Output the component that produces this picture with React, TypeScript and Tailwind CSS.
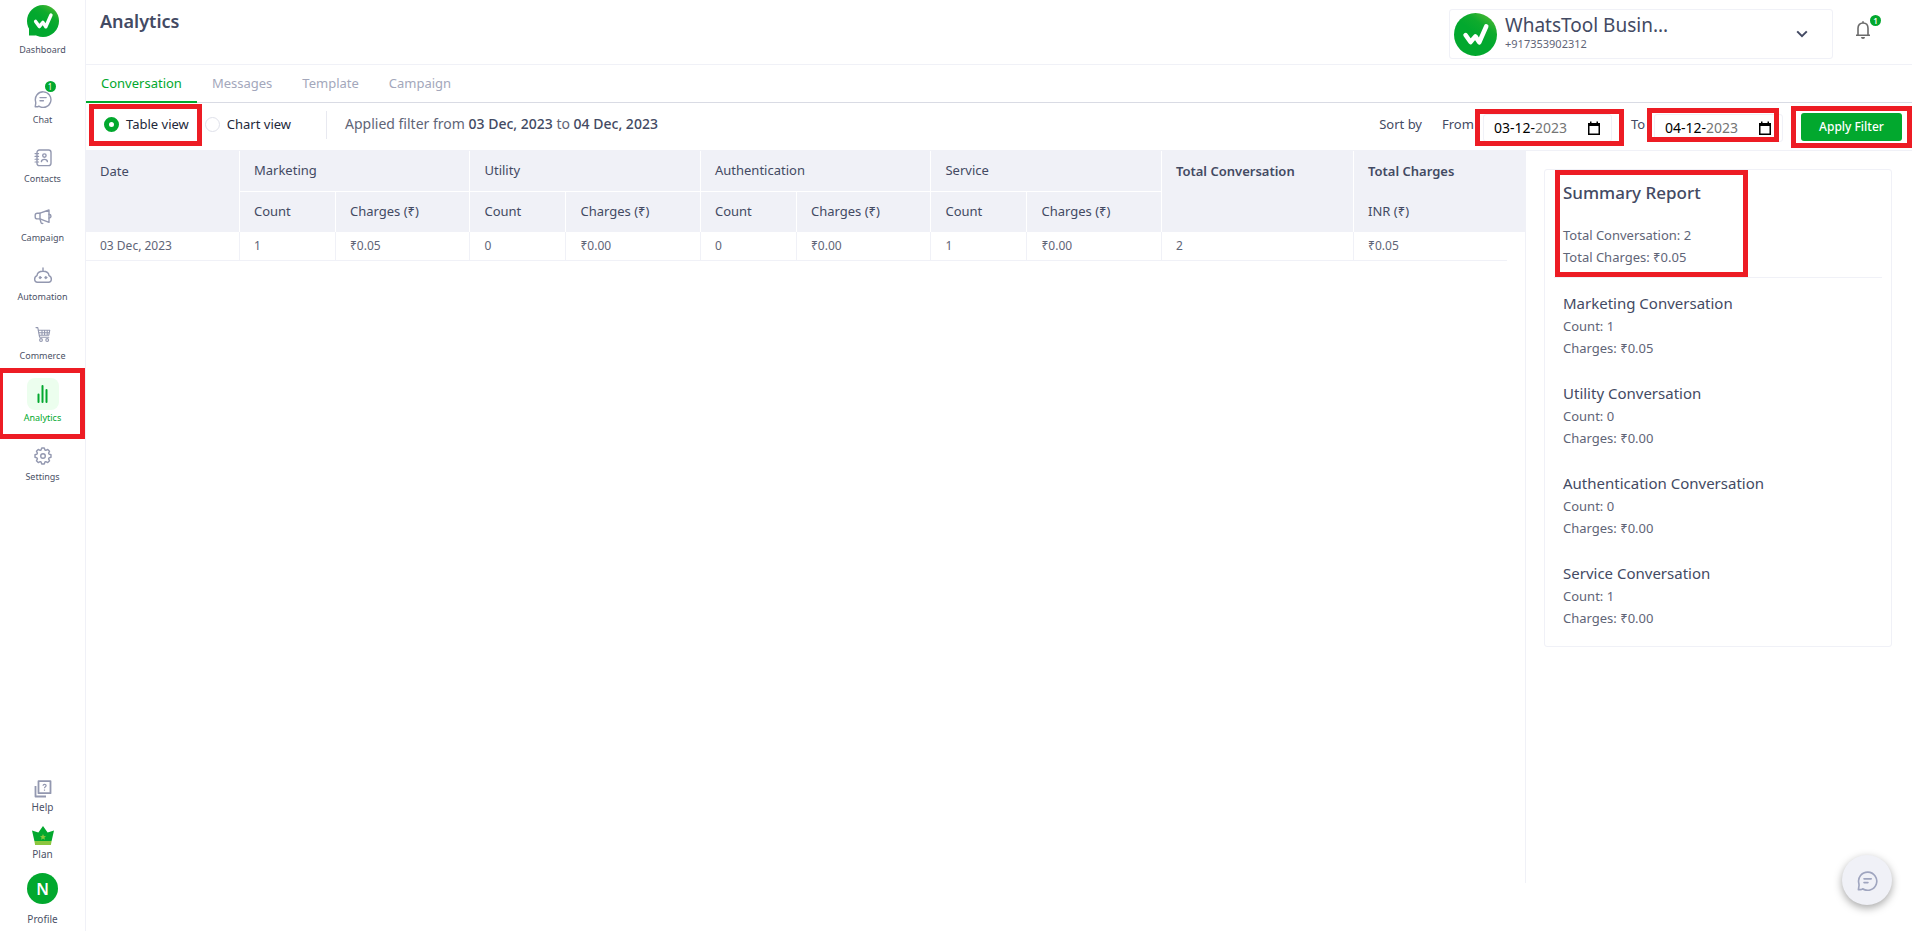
import React, { useState } from "react";

type IconProps = { className?: string };

const iconBase = {
  fill: "none",
  stroke: "currentColor",
  strokeWidth: 1.4,
  strokeLinecap: "round" as const,
  strokeLinejoin: "round" as const,
  "aria-hidden": true,
};

function LogoIcon({ className, bubble, id }: IconProps & { bubble?: boolean; id: string }) {
  return (
    <svg viewBox="0 0 32 32" className={className} aria-hidden="true">
      <defs>
        <linearGradient id={id} x1="0.9" y1="0" x2="0.55" y2="0.5">
          <stop offset="0" stopColor="#5abb35" />
          <stop offset="0.6" stopColor="#0fab2d" />
          <stop offset="1" stopColor="#02a82e" />
        </linearGradient>
      </defs>
      <circle cx="16" cy="16" r="16" fill={`url(#${id})`} />
      {bubble && <path d="M2 20v10.5q5 .3 9-.6z" fill="#02a82e" />}
      <path
        d="M8.600 16.400l3.700 5.200 3.600-4.200 2.900 4.400 5.200-11.800"
        fill="none"
        stroke="#fff"
        strokeWidth="3.400"
        strokeLinecap="round"
        strokeLinejoin="round"
      />
    </svg>
  );
}

function ChatIcon({ className }: IconProps) {
  return (
    <svg viewBox="0 0 18 18" className={className} {...iconBase}>
      <path d="M1.200 16.800h1.600q1.200 0 2-.7A7.800 7.800 0 1 0 1.600 11.600q.3 1.500 0 2.600z" />
      <path d="M6 7.600h6.200M6 10.800h3.400" />
    </svg>
  );
}

function ContactsIcon({ className }: IconProps) {
  return (
    <svg viewBox="0 0 18 18" className={className} {...iconBase}>
      <rect x="3" y="1" width="14" height="15.6" rx="2.4" />
      <path d="M1 4.600h3.600M1 7.400h3.600M1 10.200h3.600M1 13h3.600" strokeWidth="1.1" />
      <circle cx="10.4" cy="6.6" r="1.7" />
      <path d="M7.400 12.600c.3-3 5.700-3 6 0" />
    </svg>
  );
}

function CampaignIcon({ className }: IconProps) {
  return (
    <svg viewBox="0 0 18 18" className={className} {...iconBase}>
      <path d="M6 5.200L15 2v12.400L6 10.900H3.400Q1.200 10.900 1.200 8.900V7.200Q1.200 5.200 3.400 5.200z" />
      <path d="M6 5.200v5.700M15 6.300q2 .3 2 1.900t-2 1.900M6 11l1 3.600q.4 1.200 1.800.8" />
    </svg>
  );
}

function AutomationIcon({ className }: IconProps) {
  return (
    <svg viewBox="0 0 20 18" className={className} {...iconBase}>
      <path d="M10 1v3.200M4 8.600C4.600 2.800 15.400 2.800 16 8.600c3.400 1.600 3 6.600-.4 6.600H4.400C1 15.200.6 10.200 4 8.600z" />
      <circle cx="7.200" cy="10.600" r="1.100" fill="currentColor" strokeWidth="0.8" />
      <circle cx="12.800" cy="10.600" r="1.100" fill="currentColor" strokeWidth="0.8" />
    </svg>
  );
}

function CommerceIcon({ className }: IconProps) {
  return (
    <svg viewBox="0 0 18 18" className={className} {...iconBase} strokeWidth={1.1}>
      <path d="M2 1.600h1.800l1.800 9.600h9.200" />
      <path d="M4.400 4.200h11.400l-1 5H5.400M4.800 6.700h10.600M8 4.200v5M10.600 4.200v5M13.200 4.200v5" />
      <circle cx="7" cy="14" r="1.400" />
      <circle cx="13.200" cy="14" r="1.400" />
    </svg>
  );
}

function AnalyticsIcon({ className }: IconProps) {
  return (
    <svg viewBox="0 0 18 20" className={className} {...iconBase} strokeWidth={2}>
      <path d="M4.500 10.500v7.500M8.500 2v16M12.500 6v12" />
    </svg>
  );
}

const gearPoints = Array.from({ length: 8 }, (_, i) =>
  [
    [-18, 6.3],
    [-9, 8.1],
    [9, 8.1],
    [18, 6.3],
  ]
    .map(([offset, r]) => {
      const a = ((i * 45 + offset) * Math.PI) / 180;
      return `${(9 + r * Math.sin(a)).toFixed(2)},${(9 - r * Math.cos(a)).toFixed(2)}`;
    })
    .join(" "),
).join(" ");

function SettingsIcon({ className }: IconProps) {
  return (
    <svg viewBox="0 0 18 18" className={className} {...iconBase}>
      <polygon points={gearPoints} />
      <circle cx="9" cy="9" r="2.300" />
    </svg>
  );
}

function HelpIcon({ className }: IconProps) {
  return (
    <svg viewBox="0 0 18 18" className={className} {...iconBase} strokeLinecap="butt">
      <path d="M4.500 1.200h12v12h-12zM1.500 6v10.500H12" strokeWidth="1.800" strokeLinejoin="round" />
      <path d="M9 5.700c.2-1.900 3.200-1.700 3.100 0 0 1.100-1.600 1.200-1.600 2.500M10.500 9.600v1.200" strokeWidth="1.200" />
    </svg>
  );
}

function CrownIcon({ className }: IconProps) {
  return (
    <svg viewBox="0 0 22 19" className={className} aria-hidden="true">
      <path d="M0 4.500l6.400 2L11 0l4.600 6.500 6.400-2L19.600 15H2.400z" fill="#02a82e" />
      <path d="M2.400 15h17.200l-.7 4H3.100z" fill="#8cc63f" />
      <path d="M11 8l.9 2 2.100.2-1.600 1.400.5 2.100-1.900-1.100-1.900 1.100.5-2.100L8 10.200l2.100-.2z" fill="#8cc63f" />
    </svg>
  );
}

function BellIcon({ className }: IconProps) {
  return (
    <svg viewBox="0 0 16 20" className={className} {...iconBase} strokeWidth={1.6} strokeLinecap="butt">
      <path d="M1 15.200h14M3 15V8.200C3 4.900 5 3 8 3s5 1.900 5 5.200V15M8 1.200V3" strokeLinejoin="miter" />
      <path d="M6 17h4a2 2 0 0 1-4 0z" fill="currentColor" stroke="none" />
    </svg>
  );
}

function CalendarIcon({ className }: IconProps) {
  return (
    <svg viewBox="0 0 14 15" className={className} aria-hidden="true">
      <path d="M1.750 3h10.500v10.250H1.750z" fill="none" stroke="#000" strokeWidth="1.500" />
      <path d="M1 2h12v3H1zM3 .5h1.500V2H3zM9.500.5H11V2H9.500z" fill="#000" />
    </svg>
  );
}

function Highlight({ className }: { className: string }) {
  return <span aria-hidden="true" className={`pointer-events-none absolute border-5 border-[#ed1c24] ${className}`} />;
}

const navItems = [
  { label: "Chat", Icon: ChatIcon, size: "h-[18px] w-[18px]", badge: "1" },
  { label: "Contacts", Icon: ContactsIcon, size: "h-[18px] w-[18px]" },
  { label: "Campaign", Icon: CampaignIcon, size: "h-[18px] w-[18px]" },
  { label: "Automation", Icon: AutomationIcon, size: "h-[18px] w-5" },
  { label: "Commerce", Icon: CommerceIcon, size: "h-[18px] w-[18px]" },
  { label: "Analytics", Icon: AnalyticsIcon, size: "h-5 w-[18px]", active: true },
  { label: "Settings", Icon: SettingsIcon, size: "h-[18px] w-[18px]" },
];

function Sidebar() {
  return (
    <nav className="flex w-[86px] shrink-0 flex-col items-center border-r border-[#f0f1f7] pt-[5px] pb-[5px] text-[9px] leading-[14px] text-[#4b5166]">
      <a href="#dashboard" className="flex flex-col items-center gap-1.5">
        <LogoIcon id="side-logo" bubble className="h-8 w-8" />
        Dashboard
      </a>
      <ul className="mt-7 flex w-full flex-col gap-[17px]">
        {navItems.map(({ label, Icon, size, badge, active }) => (
          <li key={label} className="relative">
            <a
              href={`#${label.toLowerCase()}`}
              className={active ? "flex flex-col items-center text-[#02a82e]" : "flex flex-col items-center"}
            >
              <span
                className={
                  active
                    ? "-mt-0.5 mb-px flex h-8 w-8 items-center justify-center rounded-lg bg-[#ecfeee]"
                    : "relative flex h-7 items-center justify-center text-[#9398b0]"
                }
              >
                <Icon className={size} />
                {badge && (
                  <span className="absolute -top-1 -right-[4px] flex h-[11px] w-[11px] items-center justify-center rounded-full bg-[#02a82e] text-[8px] leading-none text-white">
                    {badge}
                  </span>
                )}
              </span>
              {label}
            </a>
            {active && <Highlight className="-top-3 right-0 -bottom-[14px] -left-0.5" />}
          </li>
        ))}
      </ul>
      <div className="mt-auto flex flex-col items-center gap-3 text-[10px]">
        <a href="#help" className="flex flex-col items-center gap-0.5">
          <HelpIcon className="h-[18px] w-[18px] text-[#9398b0]" />
          Help
        </a>
        <a href="#plan" className="flex flex-col items-center gap-0.5">
          <CrownIcon className="h-[19px] w-[22px]" />
          Plan
        </a>
        <a href="#profile" className="flex flex-col items-center gap-2">
          <span className="flex h-[31px] w-[31px] items-center justify-center rounded-full bg-[#02a82e] text-base font-semibold text-white">
            N
          </span>
          Profile
        </a>
      </div>
    </nav>
  );
}

function Header() {
  return (
    <header className="flex h-[65px] shrink-0 items-start border-b border-[#f0f1f7] pl-3.5">
      <h1 className="mt-2 text-lg leading-[26px] font-semibold text-[#434a63]">Analytics</h1>
      <button
        type="button"
        className="mt-[9px] ml-auto flex h-[50px] w-[384px] items-center rounded-[3px] border border-[#f0f1f7] pr-6 pl-1 text-left"
      >
        <LogoIcon id="account-logo" className="h-[43px] w-[43px]" />
        <span className="ml-2 flex flex-col pb-[3px]">
          <span className="text-[19px] leading-[22px] text-[#434a63]">WhatsTool Busin...</span>
          <span className="text-[11px] leading-4 text-[#5f6577]">+917353902312</span>
        </span>
        <svg viewBox="0 0 12 8" className="ml-auto h-2 w-3" {...iconBase} stroke="#434a63" strokeWidth={2} strokeLinecap="butt" strokeLinejoin="miter">
          <path d="M1.200 1.400L6 6.200l4.800-4.800" />
        </svg>
      </button>
      <button type="button" aria-label="Notifications" className="relative mt-5 mr-[41px] ml-[22px] text-[#6b6b6b]">
        <BellIcon className="h-5 w-4" />
        <span className="absolute -top-[5px] -right-[10px] flex h-[11px] w-[11px] items-center justify-center rounded-full bg-[#02a82e] text-[8px] leading-none font-semibold text-white">
          1
        </span>
      </button>
    </header>
  );
}

const tabs = ["Conversation", "Messages", "Template", "Campaign"];

function Tabs() {
  return (
    <div role="tablist" className="flex h-[38px] shrink-0 border-b border-[#d9dbe4] text-[13px] text-[#a3a7bb]">
      {tabs.map((t, i) => (
        <button
          key={t}
          type="button"
          role="tab"
          aria-selected={i === 0}
          className={
            i === 0
              ? "-mb-px border-b-2 border-[#02a82e] px-[15px] pt-0.5 text-[#02a82e]"
              : "-mb-px border-b-2 border-transparent px-[15px] pt-0.5"
          }
        >
          {t}
        </button>
      ))}
    </div>
  );
}

function ViewRadio({ label, value, view, onChange }: { label: string; value: string; view: string; onChange: (v: string) => void }) {
  return (
    <label className="flex items-center gap-[7px] text-[#23283a]">
      <input
        type="radio"
        name="view"
        checked={view === value}
        onChange={() => onChange(value)}
        className="h-[15px] w-[15px] appearance-none rounded-full border border-[#dfe1ea] checked:border-5 checked:border-[#02a82e]"
      />
      {label}
    </label>
  );
}

function DateField({ name, day, month, year }: { name: string; day: string; month: string; year: string }) {
  return (
    <div
      role="group"
      aria-label={`${name} date`}
      className="flex h-7 w-[129px] items-center rounded-[3px] border border-[#f0f1f7] pr-2.5 pl-2.5 text-sm text-black"
    >
      <input aria-label={`${name} day`} defaultValue={day} className="w-4" />-
      <input aria-label={`${name} month`} defaultValue={month} className="w-4" />-
      <input aria-label={`${name} year`} defaultValue={year} className="w-[33px] text-[#757575]" />
      <button type="button" aria-label={`Pick ${name} date`} className="ml-auto">
        <CalendarIcon className="h-[15px] w-3.5" />
      </button>
    </div>
  );
}

function FilterBar() {
  const [view, setView] = useState("table");
  return (
    <div className="flex h-12 shrink-0 items-start border-b border-[#f0f1f7] pl-[18px] text-[13px] leading-[22px] text-[#5f6577]">
      <div className="relative mt-2.5">
        <ViewRadio label="Table view" value="table" view={view} onChange={setView} />
        <Highlight className="-top-[9px] -right-[13px] -bottom-[11px] -left-[15px]" />
      </div>
      <div className="mt-2.5 ml-4">
        <ViewRadio label="Chart view" value="chart" view={view} onChange={setView} />
      </div>
      <p className="mt-2 ml-[35px] border-l border-[#e8e9f0] pt-0.5 pb-1 pl-[18px] text-sm leading-[22px]">
        Applied filter from <span className="font-medium text-[#434a63]">03 Dec, 2023</span> to{" "}
        <span className="font-medium text-[#434a63]">04 Dec, 2023</span>
      </p>
      <div className="ml-auto flex pr-2.5">
        <span className="mt-2.5 text-[#434a63]">Sort by</span>
        <span className="mt-2.5 ml-5 w-[41px] text-[#434a63]">From</span>
        <div className="relative mt-[11px]">
          <DateField name="From" day="03" month="12" year="2023" />
          <Highlight className="-top-[5px] -right-3 -bottom-1 -left-2" />
        </div>
        <span className="mt-2.5 ml-[19px] w-[23px] text-[#434a63]">To</span>
        <div className="relative mt-[11px]">
          <DateField name="To" day="04" month="12" year="2023" />
          <Highlight className="-top-1.5 right-1 bottom-0 -left-[7px]" />
        </div>
        <div className="relative mt-2.5 ml-[18px] h-7">
          <button type="button" className="h-7 w-[101px] rounded-[3px] bg-[#02a82e] text-xs font-medium text-white">
            Apply Filter
          </button>
          <Highlight className="-top-[7px] -right-2.5 -bottom-[7px] -left-2.5" />
        </div>
      </div>
    </div>
  );
}

const groups = [
  { name: "Marketing", count: "1", charges: "₹0.05" },
  { name: "Utility", count: "0", charges: "₹0.00" },
  { name: "Authentication", count: "0", charges: "₹0.00" },
  { name: "Service", count: "1", charges: "₹0.00" },
];

const thTop = "h-[41px] border-r border-b border-white pl-3.5 text-left font-normal";
const thSub = "h-10 border-r border-white pl-3.5 text-left font-normal";
const td = "h-[29px] border-r border-b border-[#f0f1f7] pl-3.5";

function ConversationTable() {
  return (
    <table className="w-full table-fixed border-separate border-spacing-0 text-[13px] text-[#5f6577]">
      <colgroup>
        <col className="w-[10.7%]" />
        {groups.map((g) => (
          <React.Fragment key={g.name}>
            <col className="w-[6.67%]" />
            <col className="w-[9.35%]" />
          </React.Fragment>
        ))}
        <col className="w-[13.35%]" />
        <col className="w-[10.61%]" />
        <col className="w-[1.26%]" />
      </colgroup>
      <thead className="bg-[#f0f1f7] text-[#434a63]">
        <tr>
          <th scope="col" rowSpan={2} className="border-r border-white pt-[11px] pl-3.5 text-left align-top font-normal">
            Date
          </th>
          {groups.map((g) => (
            <th key={g.name} scope="colgroup" colSpan={2} className={thTop}>
              {g.name}
            </th>
          ))}
          <th scope="col" rowSpan={2} className="border-r border-white pt-[11px] pl-3.5 text-left align-top font-semibold">
            Total Conversation
          </th>
          <th scope="col" colSpan={2} className="pt-[11px] pl-3.5 text-left align-top font-semibold">
            Total Charges
          </th>
        </tr>
        <tr>
          {groups.map((g) => (
            <React.Fragment key={g.name}>
              <th scope="col" className={thSub}>
                Count
              </th>
              <th scope="col" className={thSub}>
                Charges (₹)
              </th>
            </React.Fragment>
          ))}
          <th scope="col" colSpan={2} className="pl-3.5 text-left font-normal">
            INR (₹)
          </th>
        </tr>
      </thead>
      <tbody className="text-xs">
        <tr>
          <td className={td}>03 Dec, 2023</td>
          {groups.map((g) => (
            <React.Fragment key={g.name}>
              <td className={td}>{g.count}</td>
              <td className={td}>{g.charges}</td>
            </React.Fragment>
          ))}
          <td className={td}>2</td>
          <td className="border-b border-[#f0f1f7] pl-3.5">₹0.05</td>
          <td />
        </tr>
      </tbody>
    </table>
  );
}

function Summary() {
  return (
    <aside className="w-[386px] shrink-0 pt-[18px] pr-5 pl-[18px]">
      <div className="rounded-[3px] border border-[#f0f1f7] pb-[17px] text-[13px] leading-[22px] text-[#5f6577]">
        <div className="relative mx-[9px] border-b border-[#f0f1f7] px-[9px] pt-[9px] pb-[9px]">
          <h2 className="mb-[17px] text-[17px] leading-7 font-medium text-[#434a63]">Summary Report</h2>
          <p>Total Conversation: 2</p>
          <p>Total Charges: ₹0.05</p>
          <Highlight className="top-0 bottom-0 left-px w-[193px]" />
        </div>
        <div className="mt-[13px] flex flex-col gap-[22px] px-[18px]">
          {groups.map((g) => (
            <section key={g.name}>
              <h3 className="text-[15px] leading-6 text-[#434a63]">{g.name} Conversation</h3>
              <p>Count: {g.count}</p>
              <p>Charges: {g.charges}</p>
            </section>
          ))}
        </div>
      </div>
    </aside>
  );
}

export default function App() {
  return (
    <div className="flex min-h-screen bg-white font-['Noto_Sans','Open_Sans',sans-serif]">
      <Sidebar />
      <div className="flex min-w-0 flex-1 flex-col">
        <Header />
        <Tabs />
        <FilterBar />
        <div className="mb-12 flex flex-1">
          <main className="min-w-0 flex-1 border-r border-[#f0f1f7]">
            <ConversationTable />
          </main>
          <Summary />
        </div>
      </div>
      <button
        type="button"
        aria-label="Open chat"
        className="fixed right-5 bottom-[26px] flex h-[50px] w-[50px] items-center justify-center rounded-full bg-[#f0f1f7] text-[#9fa5bf] shadow-[0_3px_8px_rgba(0,0,0,0.35)]"
      >
        <ChatIcon className="h-[21px] w-[21px]" />
      </button>
    </div>
  );
}
